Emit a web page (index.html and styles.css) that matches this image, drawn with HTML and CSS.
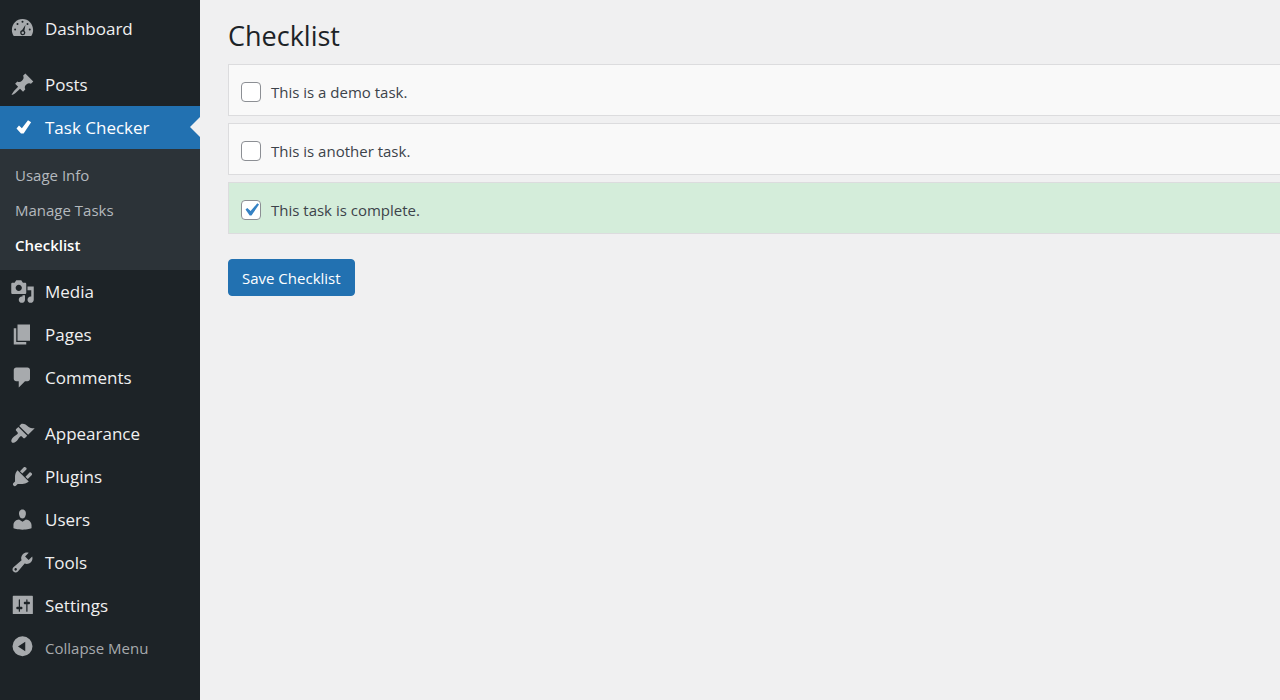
FILE: index.html
```html
<!DOCTYPE html>
<html lang="en">
<head>
    <meta charset="UTF-8">
    <meta name="viewport" content="width=device-width, initial-scale=1.0">
    <title>Checklist</title>
    <link rel="stylesheet" href="styles.css">
</head>
<body>
    <div class="admin">
        <nav class="sidebar">
            <ul class="menu">
                <li>
                    <a href="#" class="menu-link">
                        <svg class="icon" viewBox="0 0 20 20"><path fill-rule="evenodd" d="M3 16h14c.9-1.400 1.500-3 1.500-4.900C18.500 6.200 14.700 2.300 10 2.300S1.500 6.200 1.500 11.100c0 1.900.6 3.500 1.500 4.900zM9.200 4.600a.8.8 0 1 1 1.600 0a.8.8 0 1 1-1.600 0zM5.200 6.300a.8.8 0 1 1 1.600 0a.8.8 0 1 1-1.600 0zM13.200 6.300a.8.8 0 1 1 1.600 0a.8.8 0 1 1-1.600 0zM3.300 10.700a.8.8 0 1 1 1.600 0a.8.8 0 1 1-1.600 0zM15 10.700a.8.8 0 1 1 1.600 0a.8.8 0 1 1-1.600 0zM12.400 6.900l-.9 4.800c.5.400.8 1 .8 1.600a2.100 2.100 0 1 1-2.600-2.100zM9.200 13.300a1 1 0 1 0 2 0a1 1 0 1 0-2 0z"/></svg>
                        Dashboard
                    </a>
                </li>
                <li class="separator"></li>
                <li>
                    <a href="#" class="menu-link">
                        <svg class="icon" viewBox="0 0 20 20"><path d="M10.440 3.020l1.820-1.820 6.360 6.350-1.830 1.820c-1.050-.68-2.480-.57-3.410.36l-.75.75c-.92.93-1.040 2.350-.35 3.410l-1.830 1.820-2.410-2.410-2.800 2.790c-.42.42-3.380 2.710-3.800 2.290s1.860-3.390 2.280-3.810l2.790-2.790L4.100 9.360l1.830-1.820c1.050.69 2.480.57 3.400-.36l.75-.75c.93-.92 1.050-2.350.36-3.410z"/></svg>
                        Posts
                    </a>
                </li>
                <li>
                    <a href="#" class="menu-link current">
                        <svg class="icon" viewBox="0 0 20 20"><path d="M14.400 4.200l2.500 1.500-6 9.100H8.800L5.200 10.700l2-2.300 2.300 2.200z"/></svg>
                        Task Checker
                    </a>
                    <ul class="submenu">
                        <li><a href="#">Usage Info</a></li>
                        <li><a href="#">Manage Tasks</a></li>
                        <li><a href="#" class="active">Checklist</a></li>
                    </ul>
                </li>
                <li>
                    <a href="#" class="menu-link">
                        <svg class="icon" viewBox="0 0 20 20"><path d="M13 11V4c0-.55-.45-1-1-1h-1.670L9 1H5L3.670 3H2c-.55 0-1 .45-1 1v7c0 .55.45 1 1 1h10c.55 0 1-.45 1-1zM7 4.500c1.380 0 2.500 1.120 2.500 2.500S8.380 9.500 7 9.500 4.500 8.380 4.500 7 5.620 4.500 7 4.500zM14 6h5v10.500c0 1.380-1.120 2.500-2.500 2.500S14 17.880 14 16.500s1.120-2.500 2.500-2.500c.17 0 .34.02.5.05V9h-3V6zm-4 8.050V13h2v3.500c0 1.380-1.120 2.500-2.500 2.500S7 17.880 7 16.500 8.120 14 9.500 14c.17 0 .34.02.5.05z"/></svg>
                        Media
                    </a>
                </li>
                <li>
                    <a href="#" class="menu-link">
                        <svg class="icon" viewBox="0 0 20 20"><path d="M6 15V2h10v13H6zm-1 1h8v2H3V5h2v11z"/></svg>
                        Pages
                    </a>
                </li>
                <li>
                    <a href="#" class="menu-link">
                        <svg class="icon" viewBox="0 0 20 20"><path d="M5 2h9c1.100 0 2 .9 2 2v7c0 1.100-.9 2-2 2h-2l-5 5v-5H5c-1.100 0-2-.9-2-2V4c0-1.100.9-2 2-2z"/></svg>
                        Comments
                    </a>
                </li>
                <li class="separator"></li>
                <li>
                    <a href="#" class="menu-link">
                        <svg class="icon" viewBox="0 0 20 20"><path d="M14.480 11.060L7.410 3.990l1.500-1.500c.5-.56 2.300-.47 3.510.32 1.210.8 1.430 1.280 2.910 2.100 1.180.64 2.450 1.260 4.450.85zm-.71.71L6.700 4.700 4.930 6.470c-.39.39-.39 1.020 0 1.410l1.060 1.060c.39.39.39 1.030 0 1.420-.6.6-1.430 1.110-2.210 1.690-.35.26-.7.53-1.010.84C1.430 14.230.4 16.080 1.400 17.070c.99 1 2.840-.03 4.180-1.360.31-.31.58-.66.85-1.020.57-.78 1.080-1.610 1.690-2.210.39-.39 1.020-.39 1.410 0l1.060 1.060c.39.39 1.020.39 1.410 0z"/></svg>
                        Appearance
                    </a>
                </li>
                <li>
                    <a href="#" class="menu-link">
                        <svg class="icon" viewBox="0 0 20 20"><path d="M13.110 4.360L9.870 7.600 8 5.730l3.240-3.240c.35-.34 1.050-.2 1.560.32.52.51.66 1.210.31 1.550zm-8 1.770l.91-1.120 9.010 9.010-1.190.84c-.71.71-2.630 1.160-3.820 1.160H6.140L4.900 17.260c-.59.59-1.540.59-2.120 0-.59-.58-.59-1.530 0-2.120l1.240-1.240v-3.880c0-1.130.4-3.190 1.090-3.890zm7.260 3.970l3.240-3.240c.34-.35 1.040-.21 1.550.31.52.51.66 1.210.31 1.550l-3.240 3.250z"/></svg>
                        Plugins
                    </a>
                </li>
                <li>
                    <a href="#" class="menu-link">
                        <svg class="icon" viewBox="0 0 20 20"><path d="M10 9.250c-2.270 0-2.730-3.440-2.730-3.440C7 4.020 7.820 2 9.970 2c2.160 0 2.980 2.020 2.710 3.810 0 0-.41 3.440-2.680 3.440zm0 2.570L12.720 10c2.390 0 4.520 2.330 4.520 4.530v2.490s-3.650 1.130-7.240 1.130c-3.650 0-7.240-1.130-7.240-1.130v-2.490c0-2.250 1.940-4.480 4.470-4.480z"/></svg>
                        Users
                    </a>
                </li>
                <li>
                    <a href="#" class="menu-link">
                        <svg class="icon" viewBox="0 0 20 20"><path d="M16.680 9.770c-1.340 1.340-3.300 1.670-4.950.99l-5.410 6.520c-.99.99-2.590.99-3.580 0s-.99-2.590 0-3.570l6.520-5.420c-.68-1.650-.35-3.610.99-4.950 1.280-1.280 3.120-1.620 4.720-1.060l-2.890 2.890 2.820 2.820 2.860-2.870c.53 1.580.18 3.390-1.080 4.650zM3.810 16.210c.4.39 1.040.39 1.430 0 .4-.4.4-1.040 0-1.430-.39-.4-1.030-.4-1.430 0-.39.39-.39 1.030 0 1.430z"/></svg>
                        Tools
                    </a>
                </li>
                <li>
                    <a href="#" class="menu-link">
                        <svg class="icon" viewBox="0 0 20 20"><path d="M18.300 16.300V2.700c0-.3-.2-.5-.5-.5H2.700c-.3 0-.5.2-.5.5v13.600c0 .3.2.5.5.5h15.100c.3 0 .5-.2.5-.5zM8 11h1c.55 0 1 .45 1 1s-.45 1-1 1H8v1.500c0 .28-.22.5-.5.5s-.5-.22-.5-.5V13H6c-.55 0-1-.45-1-1s.45-1 1-1h1V5.500c0-.28.22-.5.5-.5s.5.22.5.5V11zm5-2h-1c-.55 0-1-.45-1-1s.45-1 1-1h1V5.500c0-.28.22-.5.5-.5s.5.22.5.5V7h1c.55 0 1 .45 1 1s-.45 1-1 1h-1v5.500c0 .28-.22.5-.5.5s-.5-.22-.5-.5V9z"/></svg>
                        Settings
                    </a>
                </li>
            </ul>
            <button type="button" class="collapse">
                <svg class="icon" viewBox="0 0 20 20"><path fill-rule="evenodd" d="M10 .2a8 8 0 1 1 0 16a8 8 0 1 1 0-16zM12.200 4.500v7.600L6.400 8.300z"/></svg>
                Collapse Menu
            </button>
        </nav>

        <main class="content">
            <h1>Checklist</h1>
            <form>
                <div class="tasks">
                    <label class="task">
                        <input type="checkbox">
                        <span>This is a demo task.</span>
                    </label>
                    <label class="task">
                        <input type="checkbox">
                        <span>This is another task.</span>
                    </label>
                    <label class="task complete">
                        <input type="checkbox" checked>
                        <span>This task is complete.</span>
                    </label>
                </div>
                <button type="button" class="save">Save Checklist</button>
            </form>
        </main>
    </div>
</body>
</html>
```
FILE: styles.css
```css
* {
    box-sizing: border-box;
}
body {
    margin: 0;
    background-color: #f0f0f1;
    color: #3c434a;
    font-family: "Segoe UI", "Open Sans", "Noto Sans", sans-serif;
    font-size: 15px;
}
ul {
    margin: 0;
    padding: 0;
    list-style: none;
}
a {
    text-decoration: none;
}
.admin {
    display: flex;
    min-height: 100vh;
}

/* sidebar */
.sidebar {
    flex: 0 0 200px;
    padding-top: 7px;
    background-color: #1d2327;
}
.menu-link,
.collapse {
    position: relative;
    display: flex;
    align-items: center;
    gap: 10px;
    width: 100%;
    height: 43px;
    padding: 0 10px;
    color: #f0f0f1;
    font-size: 17px;
    white-space: nowrap;
}
.icon {
    flex: none;
    width: 25px;
    height: 25px;
    fill: #a7aaad;
}
.separator {
    height: 13px;
}
.current {
    background-color: #2271b1;
    color: #fff;
}
.current .icon {
    fill: #fff;
}
.current::after {
    content: "";
    position: absolute;
    top: 11px;
    right: 0;
    border: 10px solid transparent;
    border-left: 0;
    border-right-color: #f0f0f1;
}
.submenu {
    padding: 9px 0 7px;
    background-color: #2c3338;
}
.submenu a {
    display: block;
    padding: 0 15px;
    color: #b4b9be;
    font-size: 15px;
    line-height: 35px;
}
.submenu .active {
    color: #fff;
    font-weight: 600;
}
.collapse {
    height: 42px;
    border: 0;
    background: none;
    color: #a7aaad;
    font-family: inherit;
    font-size: 15px;
    cursor: pointer;
}

/* content */
.content {
    flex: 1;
    min-width: 0;
    padding: 16px 0 0 28px;
    overflow: hidden;
}
h1 {
    margin: 0 0 9px;
    color: #1d2327;
    font-size: 27px;
    font-weight: 400;
    line-height: 39px;
}
.tasks {
    display: flex;
    flex-direction: column;
    gap: 7px;
    margin-right: -1px;
}
.task {
    display: flex;
    align-items: center;
    gap: 10px;
    height: 52px;
    padding: 3px 12px 0;
    border: 1px solid #dcdcde;
    background-color: #f9f9f9;
}
.task.complete {
    background-color: #d4edda;
}
.task input {
    appearance: none;
    width: 20px;
    height: 20px;
    margin: 0;
    border: 1px solid #8c8f94;
    border-radius: 4px;
    background-color: #fff;
}
.task input:checked {
    background-image: url("data:image/svg+xml,%3Csvg xmlns='http://www.w3.org/2000/svg' viewBox='0 0 20 20'%3E%3Cpath d='M14.830 4.890l1.340.94-5.810 8.380H9.020L5.780 9.670l1.340-1.250 2.570 2.400z' fill='%233582c4'/%3E%3C/svg%3E");
    background-position: center;
    background-repeat: no-repeat;
    background-size: 26px 26px;
}
.save {
    height: 37px;
    margin-top: 25px;
    padding: 0 13px;
    border: 1px solid #2271b1;
    border-radius: 4px;
    background-color: #2271b1;
    color: #fff;
    font-family: inherit;
    font-size: 15px;
    cursor: pointer;
}
```
